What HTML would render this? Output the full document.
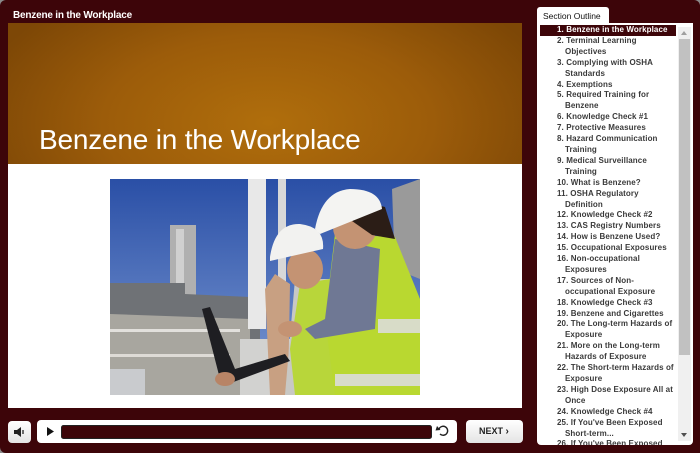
<!DOCTYPE html>
<html><head><meta charset="utf-8"><style>
*{margin:0;padding:0;box-sizing:border-box}
body{width:700px;height:453px;background:#8a8a8a;font-family:"Liberation Sans",sans-serif;overflow:hidden;position:relative}
#frame{position:absolute;left:0;top:0;width:700px;height:453px;background:#3d0509;border-radius:6px 6px 0 6px}
#title{position:absolute;left:13px;top:10px;color:#fff;font-size:10px;font-weight:bold;letter-spacing:-0.2px}
#slide{position:absolute;left:8px;top:23px;width:514px;height:385px;background:#fff}
#band{position:absolute;left:0;top:0;width:514px;height:141px;background:radial-gradient(ellipse 300px 160px at 260px 100px,#b06e0c 0%,#9c5c0a 55%,#7d4706 100%)}
#band h1{position:absolute;left:31px;top:101px;color:#fff;font-weight:normal;font-size:28px;letter-spacing:-0.2px}
#photo{position:absolute;left:102px;top:156px}
#tab{position:absolute;left:537px;top:7px;width:72px;height:17px;background:#fff;border-radius:3px 3px 0 0;font-size:8.5px;padding:4px 0 0 6px;color:#111}
#list{position:absolute;left:537px;top:23px;width:156px;height:422px;background:#fff;border-radius:0 0 4px 4px;overflow:hidden}
#items{position:absolute;left:3px;top:2px;width:136px;font-size:8px;font-weight:bold;color:#3a3a3a;line-height:10.9px;letter-spacing:0.1px}
#items div{padding-left:17px;text-indent:0}
#items div span{display:block;padding-left:8px}
#items .sel{background:#3d0509;color:#fff}
#sb{position:absolute;left:141px;top:4px;width:13px;height:414px;background:#f0f0f0}
#thumb{position:absolute;left:1px;top:12px;width:11px;height:316px;background:#c1c1c1}
.btn{position:absolute;background:linear-gradient(#fff,#e4e4e4);border-radius:4px}
</style></head><body>
<div id="frame"></div>
<div id="title">Benzene in the Workplace</div>
<div id="slide">
 <div id="band"><h1>Benzene in the Workplace</h1></div>
 <svg id="photo" width="310" height="216" viewBox="0 0 310 216">
  <defs><linearGradient id="sky" x1="0" y1="0" x2="0" y2="1"><stop offset="0" stop-color="#2a4fa6"/><stop offset="1" stop-color="#7d9bd4"/></linearGradient></defs>
  <rect width="310" height="216" fill="url(#sky)"/>
  <rect x="60" y="46" width="26" height="80" fill="#b0b0b0"/>
  <rect x="66" y="50" width="8" height="75" fill="#d0d0d0"/>
  <path d="M0 104 L75 104 L75 115 L140 118 L150 150 L150 216 L0 216Z" fill="#6f7276"/>
  <path d="M0 135 L140 140 L140 216 L0 216Z" fill="#a8a69f"/>
  <rect x="0" y="150" width="130" height="3" fill="#e2e0dc"/>
  <rect x="0" y="175" width="120" height="3" fill="#dedbd6"/>
  <rect x="0" y="190" width="35" height="26" fill="#c9cbce"/>
  <rect x="138" y="0" width="18" height="150" fill="#e8e8e8"/>
  <rect x="168" y="0" width="8" height="120" fill="#d8d8d8"/>
  <rect x="130" y="160" width="60" height="56" fill="#d2d2d0"/>
  <path d="M282 10 L310 0 L310 100 L285 90Z" fill="#9a9a9a"/>
  <path d="M155 110 L165 95 L180 105 L178 216 L160 216Z" fill="#c8a082"/>
  <path d="M185 100 L225 100 L230 216 L175 216Z" fill="#c8c8c4"/>
  <path d="M190 105 L220 100 L228 216 L185 216 L180 170Z" fill="#b8d63a"/>
  <ellipse cx="195" cy="90" rx="18" ry="20" fill="#c49373"/>
  <path d="M160 78 Q165 44 190 45 Q215 48 213 70 L160 82Z" fill="#f2f2f0"/>
  <path d="M225 55 L285 58 L310 120 L310 216 L225 216 L215 140Z" fill="#b9d830"/>
  <path d="M225 60 L270 70 L265 150 L205 160 L195 150 L215 140Z" fill="#6f7894"/>
  <rect x="268" y="140" width="42" height="14" fill="#d8dcc8"/>
  <rect x="225" y="195" width="85" height="12" fill="#d8dcc8"/>
  <ellipse cx="245" cy="48" rx="22" ry="22" fill="#c49373"/>
  <path d="M232 35 Q245 20 275 28 L285 60 L262 56Z" fill="#2b1d16"/>
  <path d="M205 50 Q212 12 240 10 Q270 10 272 30 L210 55Z" fill="#f4f4f2"/>
  <ellipse cx="180" cy="150" rx="12" ry="8" fill="#c49373"/>
  <path d="M92 130 L100 128 L125 190 L175 175 L180 182 L118 205 L110 200Z" fill="#1e1e22"/>
  <ellipse cx="115" cy="200" rx="10" ry="7" fill="#b88466"/>
 </svg>
</div>
<div id="tab">Section Outline</div>
<div id="list">
 <div id="items">
  <div class="sel">1. Benzene in the Workplace</div>
  <div>2. Terminal Learning<span>Objectives</span></div>
  <div>3. Complying with OSHA<span>Standards</span></div>
  <div>4. Exemptions</div>
  <div>5. Required Training for<span>Benzene</span></div>
  <div>6. Knowledge Check #1</div>
  <div>7. Protective Measures</div>
  <div>8. Hazard Communication<span>Training</span></div>
  <div>9. Medical Surveillance<span>Training</span></div>
  <div>10. What is Benzene?</div>
  <div>11. OSHA Regulatory<span>Definition</span></div>
  <div>12. Knowledge Check #2</div>
  <div>13. CAS Registry Numbers</div>
  <div>14. How is Benzene Used?</div>
  <div>15. Occupational Exposures</div>
  <div>16. Non-occupational<span>Exposures</span></div>
  <div>17. Sources of Non-<span>occupational Exposure</span></div>
  <div>18. Knowledge Check #3</div>
  <div>19. Benzene and Cigarettes</div>
  <div>20. The Long-term Hazards of<span>Exposure</span></div>
  <div>21. More on the Long-term<span>Hazards of Exposure</span></div>
  <div>22. The Short-term Hazards of<span>Exposure</span></div>
  <div>23. High Dose Exposure All at<span>Once</span></div>
  <div>24. Knowledge Check #4</div>
  <div>25. If You've Been Exposed<span>Short-term...</span></div>
  <div>26. If You've Been Exposed</div>
 </div>
 <div id="sb"><div id="thumb"></div>
  <div style="position:absolute;left:3px;top:4px;width:0;height:0;border-left:3.5px solid transparent;border-right:3.5px solid transparent;border-bottom:4px solid #a0a0a0"></div>
  <div style="position:absolute;left:3px;top:406px;width:0;height:0;border-left:3.5px solid transparent;border-right:3.5px solid transparent;border-top:4px solid #505050"></div>
 </div>
</div>
<div class="btn" style="left:8px;top:421px;width:23px;height:22px">
 <svg width="23" height="22"><path d="M6 9h3l4-3v10l-4-3H6z" fill="#222"/><path d="M15 9v4" stroke="#222" stroke-width="1.3"/></svg>
</div>
<div class="btn" style="left:37px;top:420px;width:420px;height:23px;background:#fff">
 <svg width="420" height="23" style="position:absolute;left:0;top:0">
  <path d="M10 7l7 4.5-7 4.5z" fill="#111"/>
  <rect x="24.5" y="5.5" width="370" height="13" rx="2" fill="#3d0509" stroke="#222"/>
  <path d="M402 9 A4.5 4.5 0 1 1 403 14" fill="none" stroke="#222" stroke-width="1.4"/>
  <path d="M400 6 L403.5 10 L398.5 10.5Z" fill="#222"/>
 </svg>
</div>
<div class="btn" style="left:466px;top:420px;width:57px;height:23px;font-size:9px;font-weight:bold;color:#222;padding:6px 0 0 13px">NEXT <span style="font-size:10px">&#8250;</span></div>
</body></html>
